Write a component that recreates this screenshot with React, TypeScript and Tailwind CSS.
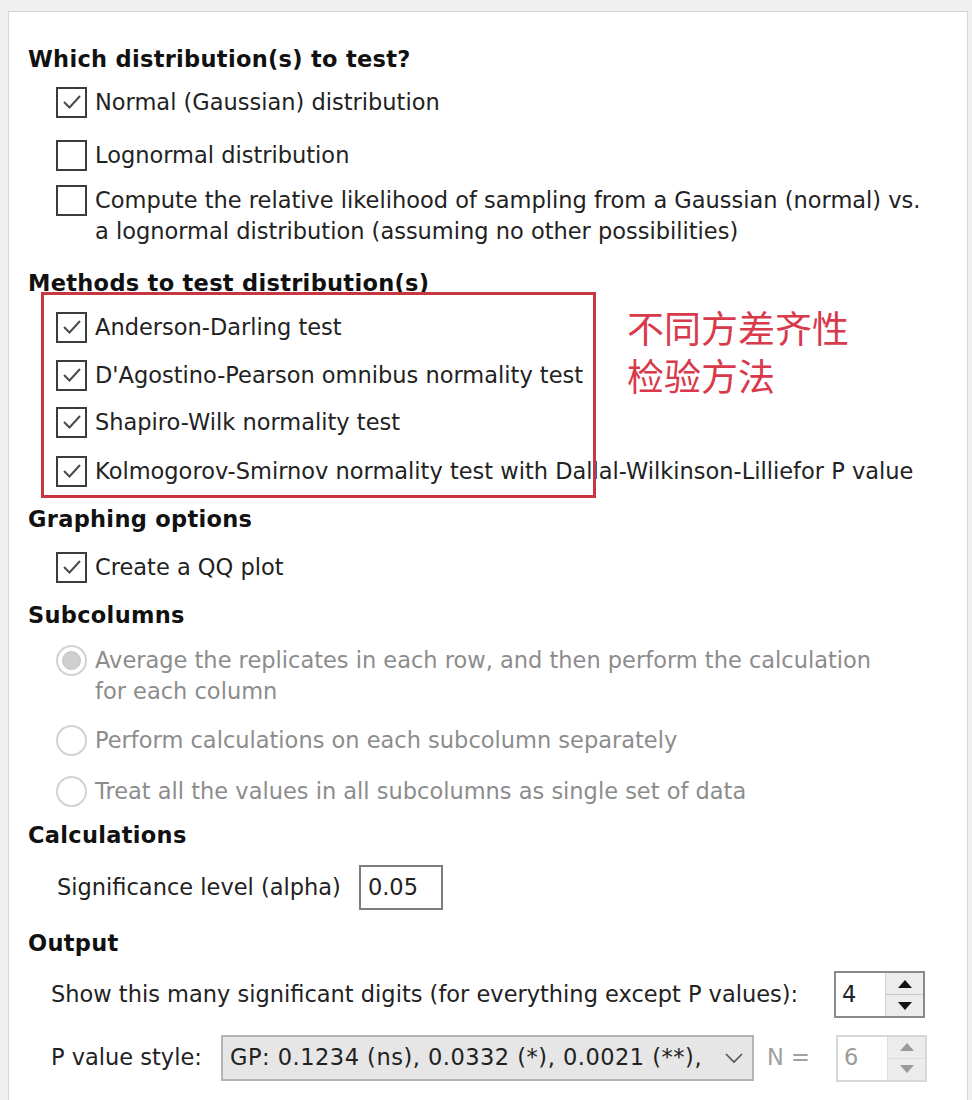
import React from "react";

const font = { fontFamily: '"DejaVu Sans", Verdana, sans-serif' };

const Check = ({ checked }: { checked: boolean }) => (
  <div className="w-[31px] h-[31px] shrink-0 border-2 border-[#3c3c3c] bg-white flex items-center justify-center">
    {checked && (
      <svg width="22" height="22" viewBox="0 0 22 22">
        <polyline points="3,11 8.5,16.5 19,5" fill="none" stroke="#4a4a4a" strokeWidth="2" />
      </svg>
    )}
  </div>
);

const Radio = ({ selected }: { selected?: boolean }) => (
  <div className="w-[31px] h-[31px] shrink-0 rounded-full border-2 border-[#d2d2d2] bg-white flex items-center justify-center">
    {selected && <div className="w-[19px] h-[19px] rounded-full bg-[#cfcfcf] border border-[#c4c4c4]" />}
  </div>
);

const Heading = ({ children, mt }: { children: React.ReactNode; mt: string }) => (
  <div className={`${mt} h-[32px] leading-[32px] font-bold text-[#111] text-[22.5px] tracking-[0.3px]`}>{children}</div>
);

const CheckRow = ({ label, mt, checked = true }: { label: React.ReactNode; mt: string; checked?: boolean }) => (
  <div className={`${mt} min-h-[32px] pl-[28px] flex items-start gap-[8px]`}>
    <div className="h-[32px] flex items-center">
      <Check checked={checked} />
    </div>
    <div className="leading-[31px] pt-[1px] text-[#222] whitespace-nowrap">{label}</div>
  </div>
);

const RadioRow = ({ label, mt, selected }: { label: React.ReactNode; mt: string; selected?: boolean }) => (
  <div className={`${mt} min-h-[32px] pl-[28px] flex items-start gap-[8px]`}>
    <div className="h-[32px] flex items-center">
      <Radio selected={selected} />
    </div>
    <div className="leading-[31px] pt-[1px] text-[#8c8c8c] whitespace-nowrap">{label}</div>
  </div>
);

const Spinner = ({ value, disabled }: { value: string; disabled?: boolean }) => (
  <div
    className={`w-[91px] h-[47px] shrink-0 flex border-2 ${disabled ? "border-[#d8d8d8]" : "border-[#8a8a8a]"} bg-white`}
  >
    <div className={`flex-1 pl-[6px] flex items-center ${disabled ? "text-[#9a9a9a]" : "text-[#222]"}`}>{value}</div>
    <div className={`w-[38px] flex flex-col border-l ${disabled ? "border-[#e0e0e0]" : "border-[#d0d0d0]"}`}>
      <div className={`flex-1 flex items-center justify-center bg-[#ececec] border-b ${disabled ? "border-[#dcdcdc]" : "border-[#c8c8c8]"}`}>
        <svg width="14" height="8" viewBox="0 0 14 8">
          <polygon points="7,0 14,8 0,8" fill={disabled ? "#9a9a9a" : "#111"} />
        </svg>
      </div>
      <div className="flex-1 flex items-center justify-center bg-[#ececec]">
        <svg width="14" height="8" viewBox="0 0 14 8">
          <polygon points="0,0 14,0 7,8" fill={disabled ? "#9a9a9a" : "#111"} />
        </svg>
      </div>
    </div>
  </div>
);

export default function App() {
  return (
    <div className="relative w-[972px] h-[1100px] overflow-hidden bg-[#f0f0f0] pt-[11px] pl-[8px] pr-[4px] text-[22.5px]" style={font}>
      <div className="h-[1200px] bg-white border border-[#d6d6d6] pl-[19px] pt-[31px]">
        <Heading mt="mt-0">Which distribution(s) to test?</Heading>
        <CheckRow mt="mt-[11px]" label="Normal (Gaussian) distribution" />
        <CheckRow mt="mt-[21px]" checked={false} label="Lognormal distribution" />
        <CheckRow
          mt="mt-[13px]"
          checked={false}
          label={
            <>
              Compute the relative likelihood of sampling from a Gaussian (normal) vs.
              <br />a lognormal distribution (assuming no other possibilities)
            </>
          }
        />
        <Heading mt="mt-[20px]">Methods to test distribution(s)</Heading>
        <CheckRow mt="mt-[12px]" label="Anderson-Darling test" />
        <CheckRow mt="mt-[16px]" label="D'Agostino-Pearson omnibus normality test" />
        <CheckRow mt="mt-[15px]" label="Shapiro-Wilk normality test" />
        <CheckRow mt="mt-[17px]" label="Kolmogorov-Smirnov normality test with Dallal-Wilkinson-Lilliefor P value" />
        <Heading mt="mt-[16px]">Graphing options</Heading>
        <CheckRow mt="mt-[16px]" label="Create a QQ plot" />
        <Heading mt="mt-[16px]">Subcolumns</Heading>
        <RadioRow
          mt="mt-[13px]"
          selected
          label={
            <>
              Average the replicates in each row, and then perform the calculation
              <br />
              for each column
            </>
          }
        />
        <RadioRow mt="mt-[17px]" label="Perform calculations on each subcolumn separately" />
        <RadioRow mt="mt-[19px]" label="Treat all the values in all subcolumns as single set of data" />
        <Heading mt="mt-[12px]">Calculations</Heading>
        <div className="mt-[14px] h-[45px] pl-[29px] flex items-center gap-[18px] text-[#222]">
          <span>Significance level (alpha)</span>
          <div className="w-[84px] h-[45px] border-2 border-[#7d7d7d] bg-white pl-[7px] flex items-center">0.05</div>
        </div>
        <Heading mt="mt-[17px]">Output</Heading>
        <div className="mt-[12px] h-[47px] pl-[23px] pr-[42px] flex items-center justify-between text-[#222]">
          <span className="whitespace-nowrap">Show this many significant digits (for everything except P values):</span>
          <Spinner value="4" />
        </div>
        <div className="mt-[17px] h-[46px] pl-[23px] flex items-center text-[#222]">
          <span className="w-[170px] shrink-0">P value style:</span>
          <div className="w-[533px] h-[46px] shrink-0 border-2 border-[#b4b4b4] bg-[#e6e6e6] flex items-center pl-[7px] pr-[8px]">
            <span className="w-[478px] overflow-hidden whitespace-nowrap tracking-[0.5px]">GP: 0.1234 (ns), 0.0332 (*), 0.0021 (**),</span>
            <svg width="20" height="12" viewBox="0 0 20 12" className="ml-auto shrink-0">
              <polyline points="2,2 10,10 18,2" fill="none" stroke="#555" strokeWidth="1.6" />
            </svg>
          </div>
          <span className="ml-[13px] w-[69px] shrink-0 text-[#a0a0a0]">N =</span>
          <Spinner value="6" disabled />
        </div>
      </div>

      {/* annotation overlay */}
      <div className="absolute left-[41px] top-[292px] w-[555px] h-[206px] border-[3px] border-[#c8363f]" />
      <div
        className="absolute left-[627px] top-[303px] text-[37px] leading-[48px] text-[#d83a4c]"
        style={{ fontFamily: '"Noto Sans CJK SC", sans-serif' }}
      >
        不同方差齐性
        <br />
        检验方法
      </div>
    </div>
  );
}
